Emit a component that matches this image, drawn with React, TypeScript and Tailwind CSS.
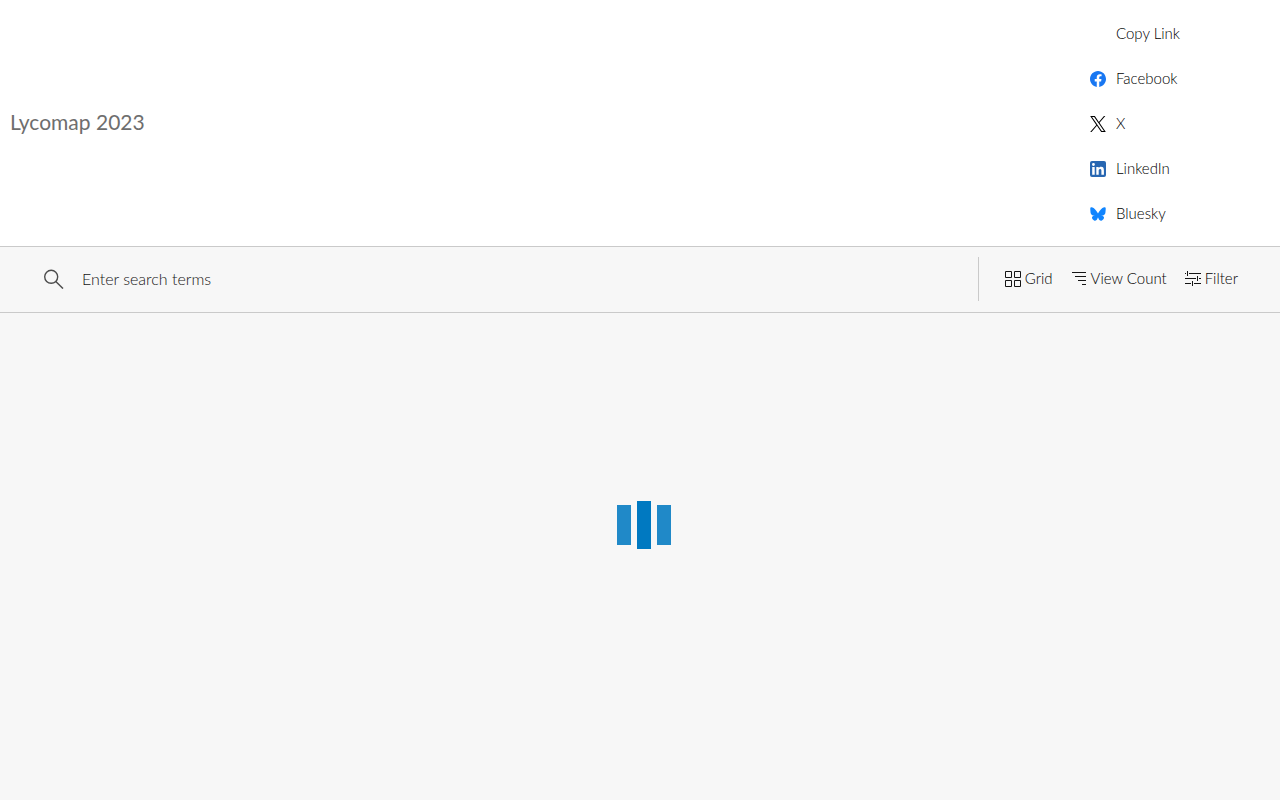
import { useState } from "react";
import type { ReactNode } from "react";

interface ShareItem {
  name: string;
  href: string;
  icon: ReactNode;
}

const shareItems: ShareItem[] = [
  {
    name: "Facebook",
    href: "#facebook",
    icon: (
      <svg viewBox="0 0 24 24" className="size-4" fill="#1877f2" aria-hidden="true">
        <path d="M24 12.073C24 5.446 18.627 0 12 0S0 5.446 0 12.073c0 6.026 4.388 11.02 10.125 11.927v-8.437H7.078v-3.49h3.047V9.413c0-3.026 1.792-4.697 4.533-4.697 1.312 0 2.686.235 2.686.235v2.971H15.83c-1.491 0-1.956.93-1.956 1.886v2.265h3.328l-.532 3.49h-2.796V24C19.612 23.093 24 18.099 24 12.073z" />
      </svg>
    ),
  },
  {
    name: "X",
    href: "#x",
    icon: (
      <svg viewBox="0 0 1200 1227" className="size-4" fill="#000000" aria-hidden="true">
        <path d="M714.163 519.284 1160.89 0h-105.86L667.137 450.887 357.328 0H0l468.492 681.821L0 1226.37h105.866l409.625-476.152 327.181 476.152H1200L714.137 519.284h.026ZM569.165 687.828l-47.468-67.894-377.686-540.24h162.604l304.797 435.991 47.468 67.894 396.2 566.721H892.476L569.165 687.854v-.026Z" />
      </svg>
    ),
  },
  {
    name: "LinkedIn",
    href: "#linkedin",
    icon: (
      <svg viewBox="0 0 16 16" className="size-4" aria-hidden="true">
        <rect width="16" height="16" rx="2" fill="#2867b2" />
        <path
          fill="#ffffff"
          d="M2.2 6h2.5v7.7H2.2zM3.45 2.1a1.45 1.45 0 1 1 0 2.9 1.45 1.45 0 0 1 0-2.9zM6.3 6h2.4v1.1c.4-.7 1.2-1.3 2.4-1.3 2.4 0 2.8 1.6 2.8 3.6v4.3h-2.5V9.9c0-.9 0-2-1.3-2s-1.4 1-1.4 2v3.8H6.3z"
        />
      </svg>
    ),
  },
  {
    name: "Bluesky",
    href: "#bluesky",
    icon: (
      <svg viewBox="0 0 600 530" className="size-4" fill="#1185fe" aria-hidden="true">
        <path d="M135.72 44.03C202.216 93.951 273.74 195.17 300 249.49c26.262-54.316 97.782-155.54 164.28-205.46C512.26 8.009 590-19.862 590 68.825c0 17.712-10.155 148.79-16.111 170.07-20.703 73.984-96.144 92.854-163.25 81.433 117.3 19.964 147.14 86.092 82.697 152.22-122.39 125.59-175.91-31.511-189.63-71.766-2.514-7.38-3.69-10.832-3.708-7.896-.017-2.936-1.193.516-3.707 7.896-13.714 40.255-67.233 197.36-189.63 71.766-64.444-66.128-34.605-132.26 82.697-152.22-67.108 11.421-142.55-7.45-163.25-81.433C20.15 217.613 9.997 86.535 9.997 68.825c0-88.687 77.742-60.816 125.72-24.795z" />
      </svg>
    ),
  },
];

function SearchIcon() {
  return (
    <svg viewBox="0 0 20 20" className="size-5" fill="none" stroke="#4c4c4c" strokeWidth="1.4" aria-hidden="true">
      <circle cx="7.2" cy="7.8" r="6.5" />
      <path d="M11.8 12.4 19 19.6" />
    </svg>
  );
}

function GridIcon() {
  return (
    <svg viewBox="0 0 16 16" className="size-4" fill="none" stroke="#151515" aria-hidden="true">
      <path d="M.5.5h6v6h-6zM9.5.5h6v6h-6zM.5 9.5h6v6h-6zM9.5 9.5h6v6h-6z" />
    </svg>
  );
}

function SortIcon() {
  return (
    <svg viewBox="0 0 16 16" className="size-4" fill="none" stroke="#151515" aria-hidden="true">
      <path d="M1 1.5h14M4 5.5h11M7 9.5h8M11 13.5h4" />
    </svg>
  );
}

function FilterIcon() {
  return (
    <svg viewBox="0 0 16 16" className="size-4" fill="none" stroke="#151515" aria-hidden="true">
      <path d="M0 2.5h1M2.5 0v5M4 2.5h12M0 7.5h11M12.5 5v5M14 7.5h2M0 12.5h6M7.5 10v5M9 12.5h7" />
    </svg>
  );
}

const tools = [
  { name: "Grid", icon: <GridIcon /> },
  { name: "View Count", icon: <SortIcon /> },
  { name: "Filter", icon: <FilterIcon /> },
];

function ShareList() {
  return (
    <ul className="w-[190px] text-[15px] text-black">
      <li>
        <button type="button" className="flex h-[45px] items-center pl-[26px]">
          Copy Link
        </button>
      </li>
      {shareItems.map((item) => (
        <li key={item.name}>
          <a href={item.href} className="flex h-[45px] items-center gap-[10px]">
            <span className="pt-px">{item.icon}</span>
            {item.name}
          </a>
        </li>
      ))}
    </ul>
  );
}

function Toolbar() {
  const [search, setSearch] = useState("");

  return (
    <div className="flex items-center border-y border-[#cacaca] pt-[10px] pb-[11px] pr-[42px] pl-[44px]">
      <label htmlFor="search" aria-label="Search">
        <SearchIcon />
      </label>
      <input
        id="search"
        type="text"
        value={search}
        onChange={(e) => setSearch(e.target.value)}
        placeholder="Enter search terms"
        className="ml-[18px] min-w-0 flex-1 bg-transparent text-base text-black outline-none placeholder:text-[#151515]"
      />
      <div className="flex h-11 items-center gap-[18px] border-l border-[#cacaca] pl-[26px] text-[15px] text-black">
        {tools.map((tool) => (
          <button key={tool.name} type="button" className="flex items-center gap-1">
            {tool.icon}
            <span className="pb-[2px]">{tool.name}</span>
          </button>
        ))}
      </div>
    </div>
  );
}

function Loader() {
  return (
    <div role="status" aria-label="Loading" className="flex items-center justify-center gap-[6px] pt-[188px] pl-2">
      <div className="h-10 w-[14px] bg-[#2089c8]" />
      <div className="h-12 w-[14px] bg-[#0079c1]" />
      <div className="h-10 w-[14px] bg-[#2089c8]" />
    </div>
  );
}

export default function App() {
  return (
    <div className="min-h-screen bg-[#f7f7f7] font-['Lato',sans-serif] font-light">
      <header className="flex items-center justify-between bg-white pt-[11px] pb-[10px] pl-[10px]">
        <h1 className="pb-1 text-[21px] font-normal text-[#6e6e6e]">Lycomap 2023</h1>
        <ShareList />
      </header>
      <Toolbar />
      <main>
        <Loader />
      </main>
    </div>
  );
}
